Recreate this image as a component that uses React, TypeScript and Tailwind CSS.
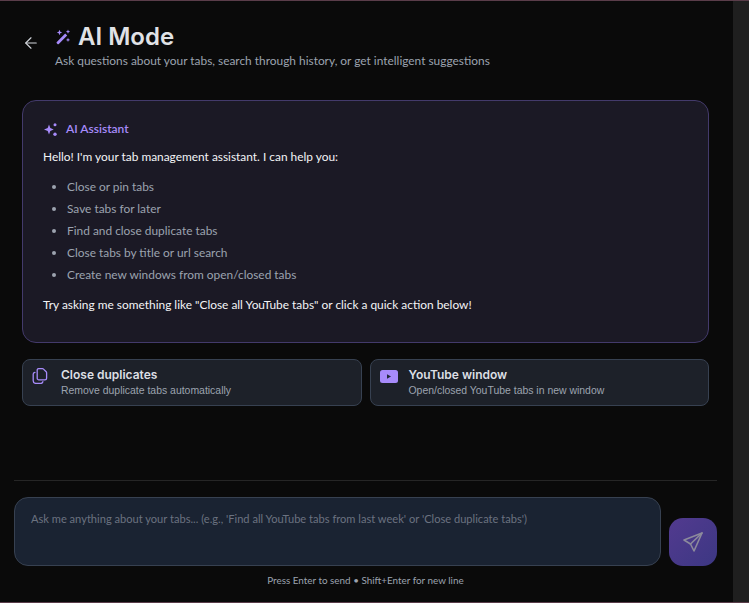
import { ArrowLeft } from 'lucide-react';

const features = [
  'Close or pin tabs',
  'Save tabs for later',
  'Find and close duplicate tabs',
  'Close tabs by title or url search',
  'Create new windows from open/closed tabs',
];

function WandIcon() {
  return (
    <svg viewBox="0 0 16 16" className="h-[16px] w-[16px]" fill="#a78bfa">
      <path d="M10.2 4.6l2 2-8.4 8.4a.9.9 0 0 1-1.3 0l-.7-.7a.9.9 0 0 1 0-1.3z" />
      <path d="M4.5.8l.8 1.9 1.9.8-1.9.8-.8 1.9-.8-1.9-1.9-.8 1.9-.8z" />
      <path d="M13 .6l.6 1.5 1.5.6-1.5.6-.6 1.5-.6-1.5-1.5-.6 1.5-.6z" />
      <path d="M13 8.8l.6 1.5 1.5.6-1.5.6-.6 1.5-.6-1.5-1.5-.6 1.5-.6z" />
    </svg>
  );
}

function SparkleIcon() {
  return (
    <svg viewBox="0 0 15 15" className="h-[15px] w-[15px]" fill="#a78bfa">
      <path d="M6 2.6l1.3 3.4 3.4 1.5-3.4 1.4L6 12.4 4.7 8.9 1 7.5 4.7 6z" />
      <circle cx="12" cy="2.8" r="1.5" />
      <circle cx="12" cy="12.2" r="1.7" />
    </svg>
  );
}

function DuplicateIcon() {
  return (
    <svg viewBox="0 0 16 16" className="h-[16px] w-[16px]" fill="none" stroke="#a78bfa" strokeWidth="1.3" strokeLinecap="round" strokeLinejoin="round">
      <path d="M5.2 1.7a1.7 1.7 0 0 1 1.7-1h3.6c.4 0 .7.1 1 .4l2.7 2.7c.3.3.4.6.4 1v5.4a1.7 1.7 0 0 1-1.7 1.7H6.9a1.7 1.7 0 0 1-1.7-1.7z" />
      <path d="M2.9 4.4A2 2 0 0 0 1.2 6.4v6.4c0 1.5 1.2 2.6 2.6 2.6h5.1a2 2 0 0 0 2-1.7" />
    </svg>
  );
}

function YoutubeIcon() {
  return (
    <svg viewBox="0 0 18 13" className="h-[13px] w-[18px]">
      <rect width="18" height="13" rx="2.5" fill="#a78bfa" />
      <path d="M7 4.2v4.6l4-2.3z" fill="#1f2937" />
    </svg>
  );
}

function SendIcon() {
  return (
    <svg viewBox="0 0 20 20" className="h-[20px] w-[20px]" fill="none" stroke="#8c8a9c" strokeWidth="1.6" strokeLinecap="round" strokeLinejoin="round">
      <path d="M19 1L1 8l6.5 4L11 19z" />
      <path d="M19 1L7.5 12" />
    </svg>
  );
}

function QuickAction({ icon, title, text }: { icon: React.ReactNode; title: string; text: string }) {
  return (
    <button className="flex h-[47px] flex-1 items-start rounded-lg border border-[#374151] bg-[#1d2129] pl-[9px] text-left">
      <span className="flex h-[32px] w-[29px] shrink-0 items-center">{icon}</span>
      <span className="flex flex-col pt-[6px]">
        <span className="text-[12px] leading-[17px] font-semibold text-[#dcdfe4] font-['Inter',sans-serif]">{title}</span>
        <span className="text-[10.45px] leading-[16px] text-[#9ca3af] font-['Liberation_Sans',sans-serif]">{text}</span>
      </span>
    </button>
  );
}

export default function App() {
  return (
    <div className="flex h-[603px] w-[749px] flex-col overflow-hidden border-t border-b border-[#5a3d4a] bg-[#0a0a0a] font-['Lato',sans-serif]">
      <div className="flex min-h-0 flex-1">
        <main className="flex h-full w-[733px] flex-col pr-[2px]">
          <header className="flex items-start pt-[20px] pl-[22px]">
            <ArrowLeft className="mt-[13px] mr-[15px] h-[18px] w-[18px] text-[#d1d5db]" strokeWidth={1.5} />
            <div>
              <div className="flex items-center gap-[7px]">
                <WandIcon />
                <h1 className="text-[24px] leading-[32px] font-semibold text-[#e0e2e6] font-['Inter',sans-serif]">AI Mode</h1>
              </div>
              <p className="text-[11.9px] leading-[16px] text-[#9ca3af]">
                Ask questions about your tabs, search through history, or get intelligent suggestions
              </p>
            </div>
          </header>

          <section className="mx-[22px] mt-[31px] h-[243px] rounded-[14px] border border-[#433a6b] bg-[#1b1925] px-[20px] pt-[20px]">
            <div className="flex items-center gap-[8px]">
              <SparkleIcon />
              <span className="text-[12px] leading-[16px] font-semibold text-[#a78bfa]">AI Assistant</span>
            </div>
            <p className="mt-[12px] text-[11.9px] leading-[16px] text-[#f3f4f6]">
              Hello! I'm your tab management assistant. I can help you:
            </p>
            <ul className="mt-[14px] flex list-disc flex-col gap-[6px] pl-[24px] text-[11.9px] leading-[16px] text-[#9ca3af]">
              {features.map((item) => (
                <li key={item}>{item}</li>
              ))}
            </ul>
            <p className="mt-[14px] text-[11.9px] leading-[16px] text-[#f3f4f6]">
              Try asking me something like "Close all YouTube tabs" or click a quick action below!
            </p>
          </section>

          <div className="mx-[22px] mt-[16px] flex gap-[8px]">
            <QuickAction icon={<DuplicateIcon />} title="Close duplicates" text="Remove duplicate tabs automatically" />
            <QuickAction icon={<YoutubeIcon />} title="YouTube window" text="Open/closed YouTube tabs in new window" />
          </div>

          <div className="mx-[14px] mt-[74px] flex flex-col border-t border-[#262626] pt-[16px]">
            <div className="flex items-end gap-[8px]">
              <textarea
                placeholder="Ask me anything about your tabs... (e.g., 'Find all YouTube tabs from last week' or 'Close duplicate tabs')"
                className="h-[69px] flex-1 resize-none rounded-[14px] border border-[#374151] bg-[#1a2332] px-[16px] pt-[13px] pb-[14px] text-[11.1px] leading-[16px] text-[#e5e7eb] outline-none placeholder:text-[#6b7280]"
              />
              <button className="flex h-[48px] w-[48px] items-center justify-center rounded-[14px] bg-gradient-to-br from-[#523a8f] to-[#3c3783]">
                <SendIcon />
              </button>
            </div>
            <p className="mt-[7px] text-center text-[9.9px] leading-[14px] text-[#9ca3af]">
              Press Enter to send • Shift+Enter for new line
            </p>
          </div>
        </main>
        <div className="h-full w-[16px] bg-[#1f1f1f]" />
      </div>
    </div>
  );
}
